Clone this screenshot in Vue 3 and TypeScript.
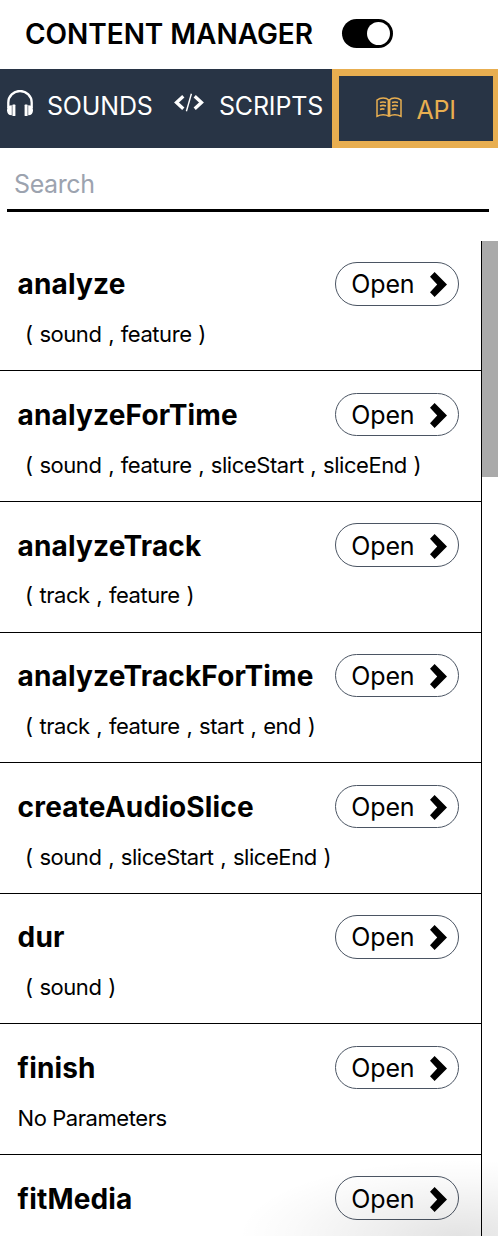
<script setup lang="ts">
import { ref } from 'vue'

interface ApiEntry {
  name: string
  params?: string[]
}

const entries: ApiEntry[] = [
  { name: 'analyze', params: ['sound', 'feature'] },
  { name: 'analyzeForTime', params: ['sound', 'feature', 'sliceStart', 'sliceEnd'] },
  { name: 'analyzeTrack', params: ['track', 'feature'] },
  { name: 'analyzeTrackForTime', params: ['track', 'feature', 'start', 'end'] },
  { name: 'createAudioSlice', params: ['sound', 'sliceStart', 'sliceEnd'] },
  { name: 'dur', params: ['sound'] },
  { name: 'finish', params: [] },
  { name: 'fitMedia' },
]

const query = ref('')
</script>

<template>
  <div class="manager">
    <header class="header">
      <h1 class="title">CONTENT MANAGER</h1>
      <button class="toggle" aria-label="Toggle content manager"><span class="knob"></span></button>
    </header>

    <nav class="tabs">
      <button class="tab sounds">
        <svg class="headphones" width="26" height="27" viewBox="0 0 26 27">
          <path d="M1.300 18V12.500A11.700 11.500 0 0 1 24.700 12.500V18" fill="none" stroke="currentColor" stroke-width="2.300" />
          <path d="M4.800 15.300C1.500 15.300 0 17.200 0 20.300S1.500 25.300 4.800 25.300Z" fill="currentColor" />
          <path d="M21.200 15.300C24.500 15.300 26 17.200 26 20.300S24.500 25.300 21.200 25.300Z" fill="currentColor" />
          <rect x="5.400" y="14.600" width="3" height="11.400" rx=".6" fill="currentColor" />
          <rect x="17.600" y="14.600" width="3" height="11.400" rx=".6" fill="currentColor" />
        </svg>
        <span class="tab-label">SOUNDS</span>
      </button>
      <button class="tab scripts">
        <svg class="code" width="30" height="20" viewBox="0 0 30 20">
          <path d="M9.300 3.200L2.500 9.500L9.300 15.800M20.700 3.200L27.500 9.500L20.700 15.800" fill="none" stroke="currentColor" stroke-width="3.300" />
          <path d="M17.400 .8L12.400 18.200" fill="none" stroke="currentColor" stroke-width="1.400" />
        </svg>
        <span class="tab-label">SCRIPTS</span>
      </button>
      <button class="tab api">
        <svg class="book" width="26" height="21" viewBox="0 0 26 21">
          <g fill="none" stroke="currentColor">
            <path d="M13 19.200C10 17.600 5 17.300 1 19.200V3.200C4.500 .4 10 .4 13 3.200C16 .4 21.500 .4 25 3.200V19.200C21 17.300 16 17.600 13 19.200Z" stroke-width="1.500" />
            <path d="M13 2.500V19.500" stroke-width="2.800" />
            <path d="M4 5.600Q7 4.500 10 5.600M4 8.900Q7 7.900 10 8.900M4 12.400Q6.500 11.500 8.500 12.200M16 5.600Q19 4.500 22 5.600M16 8.900Q19 7.900 22 8.900M16 12.400Q18.500 11.500 20.500 12.200" stroke-width="1.600" />
          </g>
        </svg>
        <span class="tab-label">API</span>
      </button>
    </nav>

    <div class="search">
      <input v-model="query" type="text" placeholder="Search" />
    </div>

    <div class="browser">
      <main class="list">
        <article v-for="entry in entries" :key="entry.name" class="entry">
          <div class="entry-head">
            <h2 class="name">{{ entry.name }}</h2>
            <button class="open">
              <span>Open</span>
              <svg width="17" height="25" viewBox="0 0 17 25">
                <path d="M0 4.800L4.600 0L17 12.500L4.600 25L0 20.200L7.200 12.500Z" fill="currentColor" />
              </svg>
            </button>
          </div>
          <p v-if="entry.params?.length" class="params">
            <span>(</span>
            <template v-for="(param, i) in entry.params" :key="param">
              <span v-if="i > 0">,</span>
              <span>{{ param }}</span>
            </template>
            <span>)</span>
          </p>
          <p v-else-if="entry.params" class="params none">No Parameters</p>
        </article>
      </main>
      <div class="scrollbar"><div class="thumb"></div></div>
    </div>
    <div class="shade"></div>
  </div>
</template>

<style>
body {
  margin: 0;
  background: #fff;
}
</style>

<style scoped>
.manager {
  position: relative;
  width: 498px;
  height: 1236px;
  overflow: hidden;
  display: flex;
  flex-direction: column;
  font-family: Inter, "Liberation Sans", sans-serif;
  color: #000;
}

.manager * {
  box-sizing: border-box;
}

button {
  font: inherit;
  color: inherit;
  padding: 0;
  border: 0;
  background: none;
}

.header {
  height: 69px;
  flex: none;
  display: flex;
  align-items: center;
  padding: 0 0 2px 25px;
}

.title {
  width: 317px;
  margin: 0;
  font-size: 28px;
  line-height: 36px;
  font-weight: 600;
  letter-spacing: -.04px;
  white-space: nowrap;
}

.toggle {
  width: 51px;
  height: 29px;
  padding: 3px;
  display: flex;
  justify-content: flex-end;
  border-radius: 15px;
  background: #000;
}

.knob {
  width: 23px;
  height: 23px;
  border-radius: 50%;
  background: #fff;
}

.tabs {
  height: 79px;
  flex: none;
  display: flex;
  background: #283445;
  color: #fff;
}

.tab {
  display: flex;
  align-items: center;
  font-size: 25px;
  line-height: 32px;
  letter-spacing: -.18px;
}

.tab-label {
  padding-top: 1px;
}

.sounds {
  width: 174px;
  padding: 0 0 7px 7px;
}

.headphones {
  margin: -3px 14px 0 0;
}

.scripts {
  width: 158px;
  padding-bottom: 7px;
}

.code {
  margin: -4px 15px 0 0;
}

.api {
  flex: 1;
  padding-left: 37px;
  border: 7px solid #e8ae50;
  border-right-width: 5px;
  color: #e8ae50;
}

.api .tab-label {
  padding-top: 2px;
}

.book {
  margin: -2px 14.500px 0 0;
}

.search {
  height: 64px;
  flex: none;
  margin: 0 9px 0 7px;
  border-bottom: 3px solid #000;
  padding: 20px 7px 0;
}

.search input {
  width: 100%;
  height: 32px;
  padding: 0;
  border: 0;
  outline: 0;
  font: 25px/32px Inter, "Liberation Sans", sans-serif;
  letter-spacing: -.4px;
  color: #000;
  background: transparent;
}

.search input::placeholder {
  color: #9ca3af;
  opacity: 1;
}

.browser {
  flex: 1;
  min-height: 0;
  margin-top: 28.800px;
  display: flex;
}

.list {
  width: 482px;
  border-right: 1px solid #000;
  overflow: hidden;
}

.entry {
  height: 130.600px;
  border-bottom: 1px solid #000;
  padding: 21.500px 22px 0 17.600px;
}

.entry-head {
  display: flex;
  align-items: center;
  justify-content: space-between;
}

.name {
  margin: 0;
  padding-top: 1px;
  font-size: 28px;
  line-height: 36px;
  font-weight: 700;
  letter-spacing: .17px;
  white-space: nowrap;
}

.open {
  width: 124px;
  height: 43.300px;
  padding: 1px 11px 0 15.300px;
  display: flex;
  align-items: center;
  justify-content: space-between;
  border: 1px solid #4b5563;
  border-radius: 22px;
  font-size: 25px;
  letter-spacing: -.15px;
}

.open svg {
  margin-top: 1px;
}

.params {
  height: 30px;
  margin: 13.600px 0 0;
  padding-left: 7.500px;
  display: flex;
  gap: 6.700px;
  font-size: 22px;
  line-height: 30px;
  letter-spacing: -.44px;
  white-space: nowrap;
}

.none {
  padding-left: 0;
}

.scrollbar {
  flex: 1;
}

.thumb {
  height: 236px;
  background: #aaa;
}

.shade {
  position: absolute;
  right: 0;
  bottom: 0;
  width: 260px;
  height: 90px;
  background: radial-gradient(ellipse 260px 90px at 85% 100%, rgba(0, 0, 0, .11), rgba(0, 0, 0, .065) 30%, rgba(0, 0, 0, .02) 65%, transparent 85%);
  pointer-events: none;
}
</style>
